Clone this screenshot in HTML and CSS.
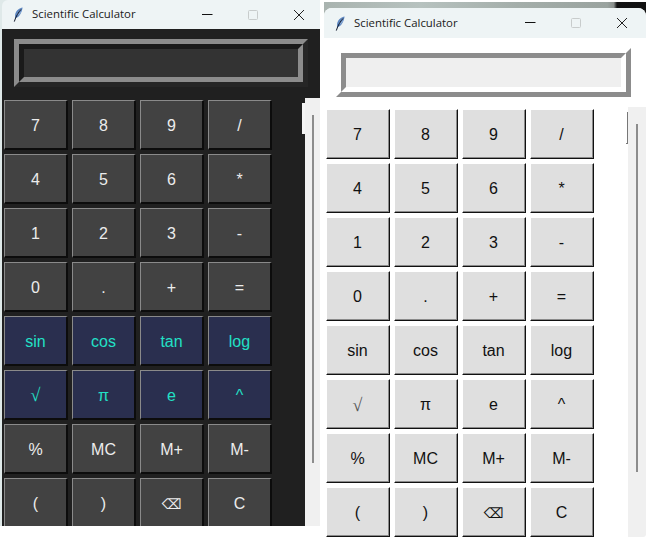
FILE: index.html
```html
<!DOCTYPE html>
<html lang="en">
<head>
<meta charset="utf-8">
<title>Scientific Calculator</title>
<link rel="stylesheet" href="styles.css">
</head>
<body>
<div class="desktop">
  <section class="window dark">
    <header class="titlebar">
      <svg class="feather" viewBox="0 0 10 15"><path class="quill" d="M9.600 .4C6.600 .8 3.400 3 2.400 6.600c-.5 1.800-.4 3.400-.1 4.600 1.800-.3 3.600-1.500 4.800-3.600C8.400 5.400 9.300 2.800 9.600 .4z"/><path class="vein" d="M7.800 2.400L4.200 7.400M8 4.600L5.200 8.400"/><path class="shaft" d="M8 2.400C5.400 5.400 2.800 9.400 1.300 14.600"/></svg>
      <span class="title">Scientific Calculator</span>
      <div class="controls">
        <svg class="ctl" viewBox="0 0 12 12"><path class="ctl-min" d="M1 5.500h10.500"/></svg>
        <svg class="ctl" viewBox="0 0 12 12"><rect class="ctl-max" x="1.500" y="1.500" width="9" height="9" rx="1"/></svg>
        <svg class="ctl" viewBox="0 0 12 12"><path class="ctl-close" d="M1 1l10 10M11 1L1 11"/></svg>
      </div>
    </header>
    <div class="client">
      <div class="display-wrap"><div class="display"><div class="display-in"></div></div></div>
      <div class="lower">
        <div class="keys">
          <button class="key">7</button><button class="key">8</button><button class="key">9</button><button class="key">/</button>
          <button class="key">4</button><button class="key">5</button><button class="key">6</button><button class="key">*</button>
          <button class="key">1</button><button class="key">2</button><button class="key">3</button><button class="key">-</button>
          <button class="key">0</button><button class="key">.</button><button class="key">+</button><button class="key">=</button>
          <button class="key fn">sin</button><button class="key fn">cos</button><button class="key fn">tan</button><button class="key fn">log</button>
          <button class="key fn root">√</button><button class="key fn">π</button><button class="key fn">e</button><button class="key fn">^</button>
          <button class="key">%</button><button class="key">MC</button><button class="key">M+</button><button class="key">M-</button>
          <button class="key">(</button><button class="key">)</button><button class="key back">⌫</button><button class="key">C</button>
        </div>
        <div class="sliver"></div>
        <div class="track"><div class="thumb"></div></div>
      </div>
    </div>
  </section>

  <div class="wallpaper"></div>

  <section class="window light">
    <header class="titlebar">
      <svg class="feather" viewBox="0 0 10 15"><path class="quill" d="M9.600 .4C6.600 .8 3.400 3 2.400 6.600c-.5 1.800-.4 3.400-.1 4.600 1.800-.3 3.600-1.500 4.800-3.600C8.400 5.400 9.300 2.800 9.600 .4z"/><path class="vein" d="M7.800 2.400L4.200 7.400M8 4.600L5.200 8.400"/><path class="shaft" d="M8 2.400C5.400 5.400 2.800 9.400 1.300 14.600"/></svg>
      <span class="title">Scientific Calculator</span>
      <div class="controls">
        <svg class="ctl" viewBox="0 0 12 12"><path class="ctl-min" d="M1 5.500h10.500"/></svg>
        <svg class="ctl" viewBox="0 0 12 12"><rect class="ctl-max" x="1.500" y="1.500" width="9" height="9" rx="1"/></svg>
        <svg class="ctl" viewBox="0 0 12 12"><path class="ctl-close" d="M1 1l10 10M11 1L1 11"/></svg>
      </div>
    </header>
    <div class="client">
      <div class="display-wrap"><div class="display"><div class="display-in"></div></div></div>
      <div class="lower">
        <div class="keys">
          <button class="key">7</button><button class="key">8</button><button class="key">9</button><button class="key">/</button>
          <button class="key">4</button><button class="key">5</button><button class="key">6</button><button class="key">*</button>
          <button class="key">1</button><button class="key">2</button><button class="key">3</button><button class="key">-</button>
          <button class="key">0</button><button class="key">.</button><button class="key">+</button><button class="key">=</button>
          <button class="key">sin</button><button class="key">cos</button><button class="key">tan</button><button class="key">log</button>
          <button class="key root">√</button><button class="key">π</button><button class="key">e</button><button class="key">^</button>
          <button class="key">%</button><button class="key">MC</button><button class="key">M+</button><button class="key">M-</button>
          <button class="key">(</button><button class="key">)</button><button class="key back">⌫</button><button class="key">C</button>
        </div>
        <div class="sliver"></div>
        <div class="track"><div class="thumb"></div></div>
      </div>
    </div>
  </section>
</div>
</body>
</html>
```
FILE: styles.css
```css
* { box-sizing: border-box; }
html, body { margin: 0; height: 100%; background: #fff; overflow: hidden; }
.desktop { position: relative; width: 646px; height: 550px; overflow: hidden; }

.window { position: absolute; display: flex; flex-direction: column; overflow: hidden; }
.window.dark { left: 0; top: 0; width: 320px; height: 526px; background: #dfe9e9; }
.window.light { left: 324px; top: 8px; width: 322px; height: 529px; background: #fff; border-radius: 8px 8px 3px 3px; }
.wallpaper { position: absolute; left: 324px; top: 2px; width: 322px; height: 14px; background: linear-gradient(90deg, #a9b3af 0%, #b7c2bf 30%, #a4aeaa 60%, #9aa39f 88%, #8a8f8c 90%, #131313 91%, #111 100%); }

.titlebar { flex: none; display: flex; align-items: center; background: #eef4f5; font: 11.4px "Open Sans", "Noto Sans", sans-serif; color: #1a1a1a; }
.dark .titlebar { height: 29px; margin-left: 2px; padding-left: 11px; border-top-left-radius: 6px; }
.light .titlebar { height: 30px; padding-left: 11px; }
.feather { width: 10px; height: 15px; flex: none; margin-right: 9px; }
.quill { fill: #5c86c0; }
.vein { fill: none; stroke: #b9cde6; stroke-width: .6; }
.shaft { fill: none; stroke: #10182a; stroke-width: 1; }
.title { white-space: nowrap; margin-top: -2px; }
.controls { margin-left: auto; display: flex; align-items: center; }
.dark .controls { margin-right: 15px; gap: 34px; }
.light .controls { margin-right: 18px; gap: 34px; }
.ctl { width: 12px; height: 12px; display: block; }
.ctl-min { stroke: #111; stroke-width: 1; fill: none; }
.ctl-max { stroke: #c8cccc; stroke-width: 1; fill: none; }
.ctl-close { stroke: #222; stroke-width: 1; fill: none; }

.client { flex: 1; display: flex; flex-direction: column; min-height: 0; }
.dark .client { margin-left: 2px; background: #202020; }
.light .client { background: #fff; }

.display-wrap { flex: none; padding: 10px 12px 11px; }
.light .display-wrap { padding-bottom: 10px; }
.display { border: 5px solid; }
.dark .display { width: 294px; height: 48px; border-color: #8c8c8c #262626 #262626 #8c8c8c; }
.light .display { width: 295px; height: 49px; border-color: #fff #8c8c8c #8c8c8c #fff; }
.display-in { height: 100%; border: 5px solid; }
.dark .display-in { background: #333; border-color: #1a1a1a #8c8c8c #8c8c8c #1a1a1a; }
.light .display-in { background: #efefef; border-color: #8c8c8c #fff #fff #8c8c8c; }

.lower { flex: 1; display: flex; min-height: 0; }
.keys { flex: none; display: grid; grid-template-columns: repeat(4, 64px); grid-auto-rows: 50px; gap: 4px; padding: 2px 0 0 2px; align-content: start; }

.key { padding: 2px 0 0; margin: 0; border-style: solid; border-width: 1px 2px 2px 1px; font: 16px "Liberation Sans", Arial, sans-serif; border-radius: 0; }
.dark .key { background: #424242; color: #ececec; border-color: #8a8a8a #0c0c0c #0c0c0c #8a8a8a; }
.dark .key.fn { background: #2a2f4f; color: #22e0c6; }
.light .key { background: #dfdfdf; color: #111; border-width: 1px; padding: 2px 1px 0 0; border-color: #fff #111 #111 #fff; box-shadow: inset -1px -1px 0 #8a8a8a; }
.key.back { font-family: "DejaVu Sans", sans-serif; font-size: 14px; }
.key.root { font-family: "Liberation Serif", serif; font-size: 18px; font-weight: 400; }
.light .key.root { color: #555; }

.sliver { flex: none; margin-left: auto; }
.dark .sliver { width: 3px; height: 31px; margin-top: 5px; background: #f4f4f4; }
.light .sliver { width: 2px; height: 32px; margin-top: 5px; border-right: 1px solid #777; border-bottom: 1px solid #777; }
.track { flex: none; background: #f0f0f0; position: relative; display: flex; justify-content: center; }
.dark .track { width: 15px; }
.light .track { width: 18px; }
.thumb { width: 2px; background: #8c8c8c; }
.dark .thumb { height: 348px; margin-top: 17px; margin-left: 1px; }
.light .thumb { height: 348px; margin-top: 17px; }
```
